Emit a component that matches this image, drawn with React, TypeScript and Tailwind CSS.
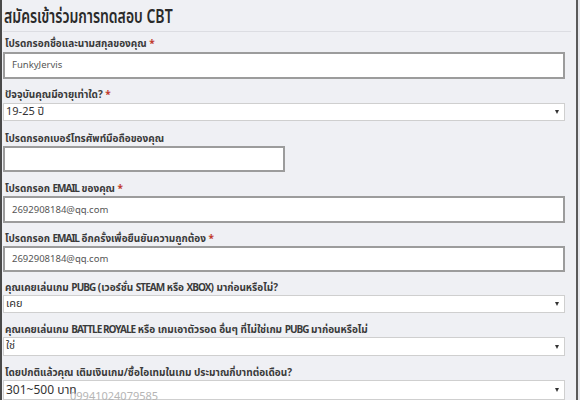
import React from "react";

const Req = () => <span className="text-[#c0392b]"> *</span>;

const L = ({ children }: { children: React.ReactNode }) => (
  <span className="text-[10px] tracking-[-1px]">{children}</span>
);

function Label({ children, req, mt }: { children: React.ReactNode; req?: boolean; mt: string }) {
  return (
    <div className={`${mt} h-[14px] pl-[2px] text-[10px] leading-[14px] font-bold text-[#3a3a3a] whitespace-nowrap`}>
      {children}
      {req && <Req />}
    </div>
  );
}

function TextBox({ value, w }: { value?: string; w: string }) {
  return (
    <div className={`${w} h-[27px] bg-white border-2 border-[#9c9c9c] flex items-center pl-[7px] text-[9.5px] text-[#555]`}>
      {value}
    </div>
  );
}

function Arrow() {
  return <span className="w-0 h-0 border-l-[2.5px] border-r-[2.5px] border-t-[4px] border-l-transparent border-r-transparent border-t-[#333]" />;
}

function Select({ value, h = "h-[18px]" }: { value: string; h?: string }) {
  return (
    <div className={`w-[562px] ${h} bg-white border border-[#cfcfcf] flex items-center justify-between pl-[2px] pr-[5px] text-[11px] text-[#333]`}>
      <span>{value}</span>
      <Arrow />
    </div>
  );
}

export default function App() {
  return (
    <div
      className="w-[580px] h-[400px] bg-[#eff0f4] flex overflow-hidden relative"
      style={{ fontFamily: '"Noto Sans Thai", "Noto Sans", "Liberation Sans", sans-serif' }}
    >
      <div className="w-[2px] h-full bg-[#4a4a4a]" />
      <div className="w-[574px] h-full pl-[1px] flex flex-col">
        <div className="h-[32px] w-[568px] border-b border-[#dcdde2] flex items-center pt-[3px] pl-[1px] whitespace-nowrap">
          <span className="inline-block origin-left scale-x-[0.7] text-[20px] font-semibold text-[#2a2a2a]">
            สมัครเข้าร่วมการทดสอบ CBT
          </span>
        </div>
        <Label mt="mt-[5px]" req>โปรดกรอกชื่อและนามสกุลของคุณ</Label>
        <div className="mt-[1px]"><TextBox w="w-[562px]" value="FunkyJervis" /></div>
        <Label mt="mt-[9px]" req>ปัจจุบันคุณมีอายุเท่าใด?</Label>
        <div className="mt-[1px]"><Select value="19-25 ปี" /></div>
        <Label mt="mt-[11px]">โปรดกรอกเบอร์โทรศัพท์มือถือของคุณ</Label>
        <TextBox w="w-[282px]" />
        <Label mt="mt-[10px]" req>โปรดกรอก <L>EMAIL</L> ของคุณ</Label>
        <TextBox w="w-[562px]" value="2692908184@qq.com" />
        <Label mt="mt-[9px]" req>โปรดกรอก <L>EMAIL</L> อีกครั้งเพื่อยืนยันความถูกต้อง</Label>
        <TextBox w="w-[562px]" value="2692908184@qq.com" />
        <Label mt="mt-[9px]">คุณเคยเล่นเกม <L>PUBG</L> (เวอร์ชั่น <L>STEAM</L> หรือ <L>XBOX</L>) มาก่อนหรือไม่?</Label>
        <Select value="เคย" />
        <Label mt="mt-[10px]">คุณเคยเล่นเกม <L>BATTLE ROYALE</L> หรือ เกมเอาตัวรอด อื่นๆ ที่ไม่ใช่เกม <L>PUBG</L> มาก่อนหรือไม่</Label>
        <Select value="ใช่" h="h-[19px]" />
        <Label mt="mt-[10px]">โดยปกติแล้วคุณ เติมเงินเกม/ซื้อไอเทมในเกม ประมาณกี่บาทต่อเดือน?</Label>
        <div className="w-[562px] h-[20px] bg-white border border-[#cfcfcf] flex items-center justify-between pl-[2px] pr-[5px] text-[12px] text-[#333]">
          <span>301~500 บาท</span>
          <Arrow />
        </div>
      </div>
      <div className="w-[2px] h-full bg-[#5a5a5a]" />
      <div className="w-[2px] h-full bg-[#e6e7eb]" />
      <div className="absolute left-[70px] top-[391px] text-[11px] leading-[12px] text-[#b5b5b5]">09941024079585</div>
    </div>
  );
}
